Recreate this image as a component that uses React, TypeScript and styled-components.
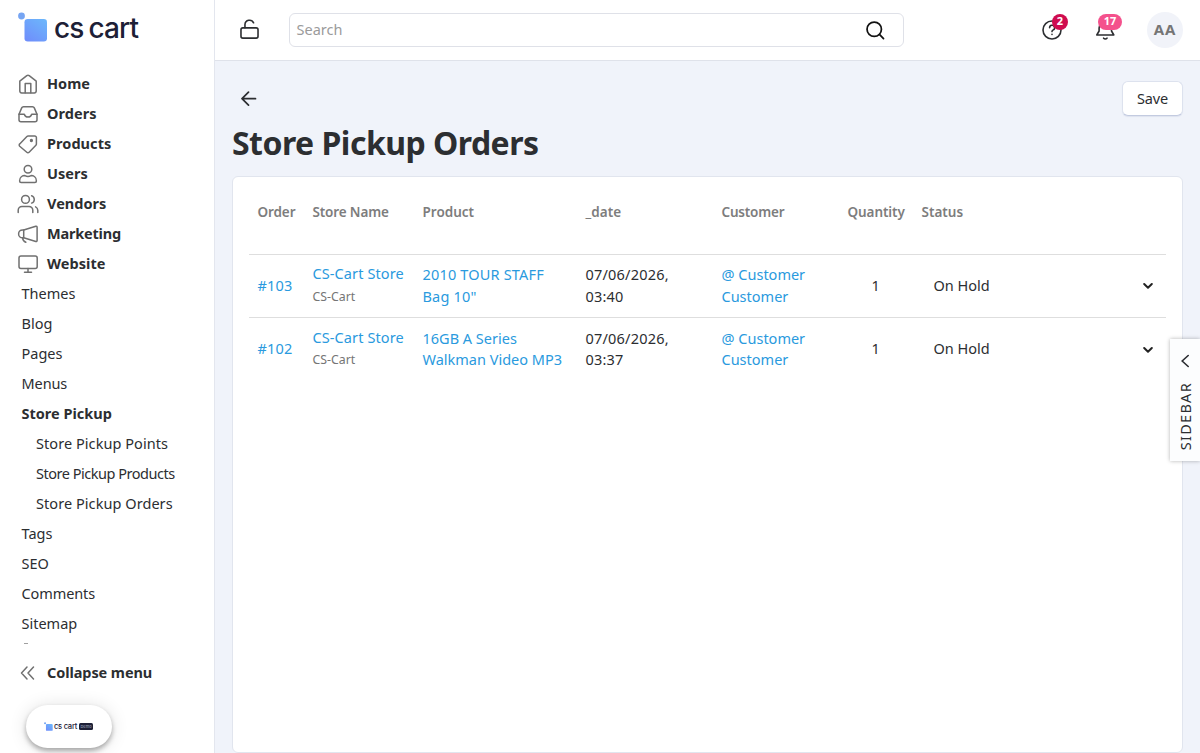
import React from 'react';
import styled, { createGlobalStyle } from 'styled-components';

const Global = createGlobalStyle`
  * { box-sizing: border-box; }
  html, body { margin: 0; padding: 0; }
  body {
    font-family: "Noto Sans", "Open Sans", sans-serif;
    font-size: 14.5px;
    color: #2c2e31;
    background: #f0f3fa;
  }
  a { color: inherit; text-decoration: none; }
  button { font: inherit; color: inherit; }
`;

const Shell = styled.div`
  display: flex;
  width: 1200px;
  height: 753px;
  overflow: hidden;
  position: relative;
`;

const Side = styled.aside`
  width: 215px;
  flex: none;
  background: #fff;
  border-right: 1px solid #e3e6ee;
  display: flex;
  flex-direction: column;
`;

const Logo = styled.div`
  height: 69px;
  flex: none;
  padding: 12px 0 0 18px;
  display: flex;
  gap: 6px;
`;

const LogoText = styled.span`
  font: 500 28px/32px Inter, sans-serif;
  letter-spacing: -0.9px;
  word-spacing: -1.5px;
  color: #1d2036;
`;

const Nav = styled.nav`
  height: 575px;
  flex: none;
  overflow: hidden;
`;

const MainItem = styled.a<{ $ls?: number }>`
  height: 30px;
  display: flex;
  align-items: center;
  gap: 8px;
  padding-left: 17px;
  font-weight: 700;
  letter-spacing: ${(p) => p.$ls ?? 0}px;
  svg { flex: none; color: #707070; }
`;

const MainLabel = styled.span`
  padding-bottom: 2px;
`;

const SubItem = styled.a<{ $deep?: boolean; $active?: boolean; $ls?: number }>`
  height: 30px;
  display: flex;
  align-items: center;
  padding-bottom: 2px;
  padding-left: ${(p) => (p.$deep ? 36 : 21.5)}px;
  font-weight: ${(p) => (p.$active ? 700 : 400)};
  letter-spacing: ${(p) => p.$ls ?? 0}px;
`;

const Peek = styled.div`
  width: 4px;
  height: 1px;
  margin: 4px 0 0 24px;
  background: #a0a0a0;
`;

const Collapse = styled(MainItem)`
  margin-top: 14px;
  flex: none;
`;

const DemoPill = styled.div`
  margin: 17px 0 0 25.5px;
  width: 86px;
  height: 43px;
  flex: none;
  border-radius: 22px;
  background: #fff;
  box-shadow: 0 3px 5px rgba(0, 0, 0, 0.3), 0 1px 18px rgba(0, 0, 0, 0.12);
  display: flex;
  align-items: center;
  justify-content: center;
  gap: 1px;
`;

const PillText = styled.span`
  font: 500 7.6px/10px Inter, sans-serif;
  letter-spacing: -0.25px;
  color: #1d2036;
`;

const PillTag = styled.span`
  width: 14px;
  height: 7px;
  margin-left: 1px;
  border-radius: 1.5px;
  background: #1d2036;
  color: #8f99b0;
  font: 500 4px/7px Inter, sans-serif;
  text-align: center;
`;

const Main = styled.main`
  flex: 1;
  min-width: 0;
  display: flex;
  flex-direction: column;
`;

const TopBar = styled.header`
  height: 61px;
  flex: none;
  background: #fff;
  border-bottom: 1px solid #dfe2ea;
  display: flex;
  align-items: center;
  padding: 0 17px 1px 22px;
`;

const SearchBox = styled.div`
  width: 615px;
  height: 34px;
  margin-left: 27px;
  border: 1px solid #dfe1e8;
  border-radius: 6px;
  display: flex;
  align-items: center;
  justify-content: space-between;
  padding: 0 16px 0 6.5px;
  color: #9b9b9b;
  svg { color: #111; }
`;

const SearchHint = styled.span`
  padding-bottom: 2px;
`;

const IconWrap = styled.div<{ $ml: number }>`
  position: relative;
  margin-left: ${(p) => p.$ml}px;
  display: flex;
`;

const Badge = styled.span<{ $w: number; $bg: string; $left: number }>`
  position: absolute;
  left: ${(p) => p.$left}px;
  top: -5px;
  width: ${(p) => p.$w}px;
  height: 16px;
  border-radius: 8px;
  background: ${(p) => p.$bg};
  color: #fff;
  font: 700 11px/14px "Noto Sans", sans-serif;
  text-align: center;
`;

const Avatar = styled.div`
  margin-left: auto;
  width: 36px;
  height: 36px;
  border-radius: 50%;
  background: #f1f3f9;
  color: #757575;
  font: 700 15px/35px "Noto Sans", sans-serif;
  letter-spacing: 0.8px;
  text-align: center;
`;

const Content = styled.section`
  flex: 1;
  display: flex;
  flex-direction: column;
  padding: 20px 17px 0 17px;
`;

const ActionRow = styled.div`
  height: 35px;
  display: flex;
  align-items: center;
  justify-content: space-between;
  padding-left: 6px;
`;

const SaveButton = styled.button`
  width: 61px;
  height: 35px;
  border: 1px solid #dde2ee;
  border-bottom-color: #c3cbe0;
  border-radius: 6px;
  background: #fff;
  padding: 0 0 2px;
  letter-spacing: -0.1px;
  box-shadow: 0 1px 1px rgba(120, 135, 180, 0.15);
`;

const Title = styled.h1`
  margin: 5px 0 0;
  height: 45px;
  font-size: 32px;
  line-height: 44px;
  font-weight: 700;
  white-space: nowrap;
  letter-spacing: -0.52px;
`;

const Card = styled.div`
  margin-top: 10px;
  height: 577px;
  flex: none;
  background: #fff;
  border: 1px solid #e1e5ee;
  border-radius: 6px;
  padding: 0 16px;
`;

const Row = styled.div`
  display: grid;
  grid-template-columns: 55px 110px 163px 136px 126px 74px 1fr;
  align-items: center;
  height: 63.4px;
  padding-left: 8.5px;
  padding-bottom: 1px;
  border-top: 1px solid #dedede;
`;

const HeadRow = styled(Row)`
  height: 77px;
  padding-bottom: 5px;
  border-top: 0;
  font-size: 13.5px;
  font-weight: 600;
  color: #7d7d7d;
`;

const Cell = styled.div<{ $ls?: number }>`
  line-height: 21.5px;
  white-space: pre;
  letter-spacing: ${(p) => p.$ls ?? 0}px;
`;

const LinkCell = styled(Cell)`
  color: #2a9ade;
`;

const StoreCell = styled(LinkCell)`
  padding-bottom: 1px;
`;

const Small = styled.div`
  margin-top: 1px;
  font-size: 12.3px;
  line-height: 21px;
  color: #757575;
  letter-spacing: 0;
`;

const Qty = styled(Cell)`
  padding-left: 24px;
`;

const StatusCell = styled(Cell)`
  display: flex;
  align-items: center;
  justify-content: space-between;
  padding: 0 13.5px 0 12px;
  svg { margin-top: 1px; }
`;

const SideTab = styled.div`
  position: absolute;
  right: 0;
  top: 339px;
  width: 30px;
  height: 122px;
  background: #fcfdfe;
  box-shadow: 0 0 4px rgba(0, 0, 0, 0.3);
  display: flex;
  flex-direction: column;
  align-items: center;
  padding: 15px 0 0;
  gap: 14px;
`;

const TabText = styled.span`
  writing-mode: vertical-rl;
  transform: rotate(180deg);
  margin-right: 1px;
  font-size: 14.5px;
  line-height: 20px;
  letter-spacing: 1.3px;
`;

const Stroke = ({ size = 22, w = 1.6, children }: { size?: number; w?: number; children: React.ReactNode }) => (
  <svg width={size} height={size} viewBox="0 0 22 22" fill="none" stroke="currentColor" strokeWidth={w} strokeLinecap="round" strokeLinejoin="round">
    {children}
  </svg>
);

const LogoMark = ({ size }: { size: number }) => (
  <svg width={size} height={size} viewBox="0 0 30 30">
    <defs>
      <linearGradient id="mark" x1="0.9" y1="0" x2="0.2" y2="1">
        <stop offset="0" stopColor="#6cb6fb" />
        <stop offset="1" stopColor="#6f8ffb" />
      </linearGradient>
    </defs>
    <circle cx="3.5" cy="4" r="3.4" fill="#76a5f3" />
    <rect x="6.5" y="7" width="22.5" height="22.5" rx="3.2" fill="url(#mark)" />
  </svg>
);

const icons: Record<string, React.ReactNode> = {
  Home: <><path d="M2.800 8.200 9.800 2.600a2 2 0 0 1 2.400 0l7 5.600v9.900a1.800 1.800 0 0 1-1.800 1.800H4.600a1.800 1.800 0 0 1-1.800-1.800Z" /><path d="M8.200 19.800v-9.300h5.600v9.300" /></>,
  Orders: <><path d="M2 11.200 4.700 4.900a2 2 0 0 1 1.800-1.200h9A2 2 0 0 1 17.300 4.900l2.700 6.300v5.600a2 2 0 0 1-2 2H4a2 2 0 0 1-2-2Z" /><path d="M2 11.200h5.300c.6 2 1.800 2.800 3.700 2.800s3.100-.8 3.700-2.800H20" /></>,
  Products: <><path d="m2.700 10.900 7.200-7.400a1.700 1.700 0 0 1 1.200-.5h6.700a1.600 1.600 0 0 1 1.600 1.600v6.500a1.700 1.700 0 0 1-.5 1.200l-6.800 7a1.600 1.600 0 0 1-2.300 0l-7.100-6.100a1.600 1.600 0 0 1 0-2.300Z" /><circle cx="14.400" cy="7.500" r="0.900" fill="currentColor" /></>,
  Users: <><circle cx="11" cy="6.300" r="3.800" /><path d="M2.600 17.900c0-3.800 3-5.300 5.300-5.300 1.500.8 4.700.8 6.200 0 2.300 0 5.300 1.500 5.300 5.300a1.500 1.500 0 0 1-1.500 1.500H4.100a1.500 1.500 0 0 1-1.500-1.500Z" /></>,
  Vendors: <><circle cx="8.500" cy="6.400" r="3.900" /><path d="M1.200 19.400v-2.200a3.800 3.800 0 0 1 3.800-3.800h7a3.800 3.800 0 0 1 3.800 3.800v2.200M14.600 2.700a3.900 3.900 0 0 1 0 7.400M18.600 13.900a4 4 0 0 1 2.200 3.400v2.100" /></>,
  Marketing: <><path d="M6.700 7 18.800 3.200a1 1 0 0 1 1.300 1v13.300a1 1 0 0 1-1.300 1L6.700 14.800H5.500a3.900 3.900 0 0 1 0-7.800Z" /><path d="M6.700 7v7.800M5.600 15c.2 2.500 1.300 3.600 3.200 4.300" /></>,
  Website: <><rect x="2" y="2.900" width="18.200" height="12.500" rx="2" /><path d="M11 15.400v3.700M7.500 19.300h7" /></>,
};

const mainItems: [string, number][] = [
  ['Home', 0], ['Orders', 0.05], ['Products', 0.05], ['Users', 0], ['Vendors', 0.03], ['Marketing', -0.2], ['Website', 0.05],
];

type Sub = { label: string; deep?: boolean; active?: boolean; ls?: number };
const subItems: Sub[] = [
  { label: 'Themes' },
  { label: 'Blog' },
  { label: 'Pages' },
  { label: 'Menus', ls: -0.1 },
  { label: 'Store Pickup', active: true },
  { label: 'Store Pickup Points', deep: true, ls: 0.06 },
  { label: 'Store Pickup Products', deep: true, ls: -0.48 },
  { label: 'Store Pickup Orders', deep: true, ls: 0.06 },
  { label: 'Tags' },
  { label: 'SEO' },
  { label: 'Comments', ls: -0.1 },
  { label: 'Sitemap' },
];

const headers: [string, number][] = [
  ['Order', -0.1], ['Store Name', -0.15], ['Product', 0], ['_date', 0.05], ['Customer', -0.2], ['Quantity', -0.08], ['Status', 0],
];

const orders = [
  { id: '#103', product: ['2010 TOUR STAFF', 'Bag 10"'], ls: 0.18, date: '07/06/2026,\n03:40' },
  { id: '#102', product: ['16GB A Series', 'Walkman Video MP3'], ls: 0, date: '07/06/2026,\n03:37' },
];

const Chevron = () => (
  <svg width="10" height="8" viewBox="0 0 10 8" fill="none" stroke="#222" strokeWidth="2" strokeLinecap="round" strokeLinejoin="round">
    <path d="M1.200 2 5 5.700 8.800 2" />
  </svg>
);

export default function App() {
  return (
    <>
      <Global />
      <Shell>
        <Side>
          <Logo>
            <LogoMark size={30} />
            <LogoText>cs cart</LogoText>
          </Logo>
          <Nav>
            {mainItems.map(([label, ls]) => (
              <MainItem key={label} $ls={ls}>
                <Stroke w={1.5}>{icons[label]}</Stroke>
                <MainLabel>{label}</MainLabel>
              </MainItem>
            ))}
            {subItems.map((s) => (
              <SubItem key={s.label} $deep={s.deep} $active={s.active} $ls={s.ls}>{s.label}</SubItem>
            ))}
            <Peek />
          </Nav>
          <Collapse $ls={-0.08}>
            <Stroke w={1.5}><path d="m10 5-5.500 6 5.500 6M16.500 5l-5.500 6 5.500 6" /></Stroke>
            <MainLabel>Collapse menu</MainLabel>
          </Collapse>
          <DemoPill>
            <LogoMark size={9} />
            <PillText>cs cart</PillText>
            <PillTag>Demo</PillTag>
          </DemoPill>
        </Side>
        <Main>
          <TopBar>
            <Stroke size={25} w={1.4}>
              <rect x="3.500" y="9.600" width="15" height="9" rx="1.600" />
              <path d="M7 9.500V6.600a4 4 0 0 1 7.600-1.500" />
            </Stroke>
            <SearchBox>
              <SearchHint>Search</SearchHint>
              <Stroke size={24} w={1.6}><circle cx="10.300" cy="10.300" r="6.600" /><path d="m15.300 15.300 3.500 3.500" /></Stroke>
            </SearchBox>
            <IconWrap $ml={137}>
              <Stroke w={1.6}><circle cx="11" cy="11" r="9" /><path d="M8.600 8.700a2.500 2.500 0 1 1 3.700 2.200c-.9.500-1.300.9-1.300 1.700M11 15.400v.1" /></Stroke>
              <Badge $w={16} $bg="#cf0c4f" $left={11}>2</Badge>
            </IconWrap>
            <IconWrap $ml={31}>
              <Stroke w={1.6}><path d="M2.800 16h17l-2.300-4V9a6.200 6.200 0 0 0-12.400 0v3ZM9.600 19.200c.9 1 2.500 1 3.400 0" /></Stroke>
              <Badge $w={24} $bg="#f4518c" $left={4}>17</Badge>
            </IconWrap>
            <Avatar>AA</Avatar>
          </TopBar>
          <Content>
            <ActionRow>
              <Stroke w={1.7}><path d="M17.500 10.700H4.300M10.500 4.200 4 10.700l6.500 6.500" /></Stroke>
              <SaveButton>Save</SaveButton>
            </ActionRow>
            <Title>Store Pickup Orders</Title>
            <Card>
              <HeadRow>
                {headers.map(([h, ls]) => <Cell key={h} $ls={ls}>{h}</Cell>)}
              </HeadRow>
              {orders.map((o) => (
                <Row key={o.id}>
                  <LinkCell $ls={0.15}>{o.id}</LinkCell>
                  <StoreCell $ls={0.1}>CS-Cart Store<Small>CS-Cart</Small></StoreCell>
                  <LinkCell $ls={o.ls}>{o.product.join('\n')}</LinkCell>
                  <Cell $ls={0.2}>{o.date}</Cell>
                  <LinkCell>{'@ Customer\nCustomer'}</LinkCell>
                  <Qty>1</Qty>
                  <StatusCell>On Hold<Chevron /></StatusCell>
                </Row>
              ))}
            </Card>
          </Content>
        </Main>
        <SideTab>
          <svg width="9" height="14" viewBox="0 0 9 14" fill="none" stroke="#2b2d32" strokeWidth="1.6" strokeLinecap="round"><path d="M7.200 1.500 1.200 7l6 5.500" /></svg>
          <TabText>SIDEBAR</TabText>
        </SideTab>
      </Shell>
    </>
  );
}
